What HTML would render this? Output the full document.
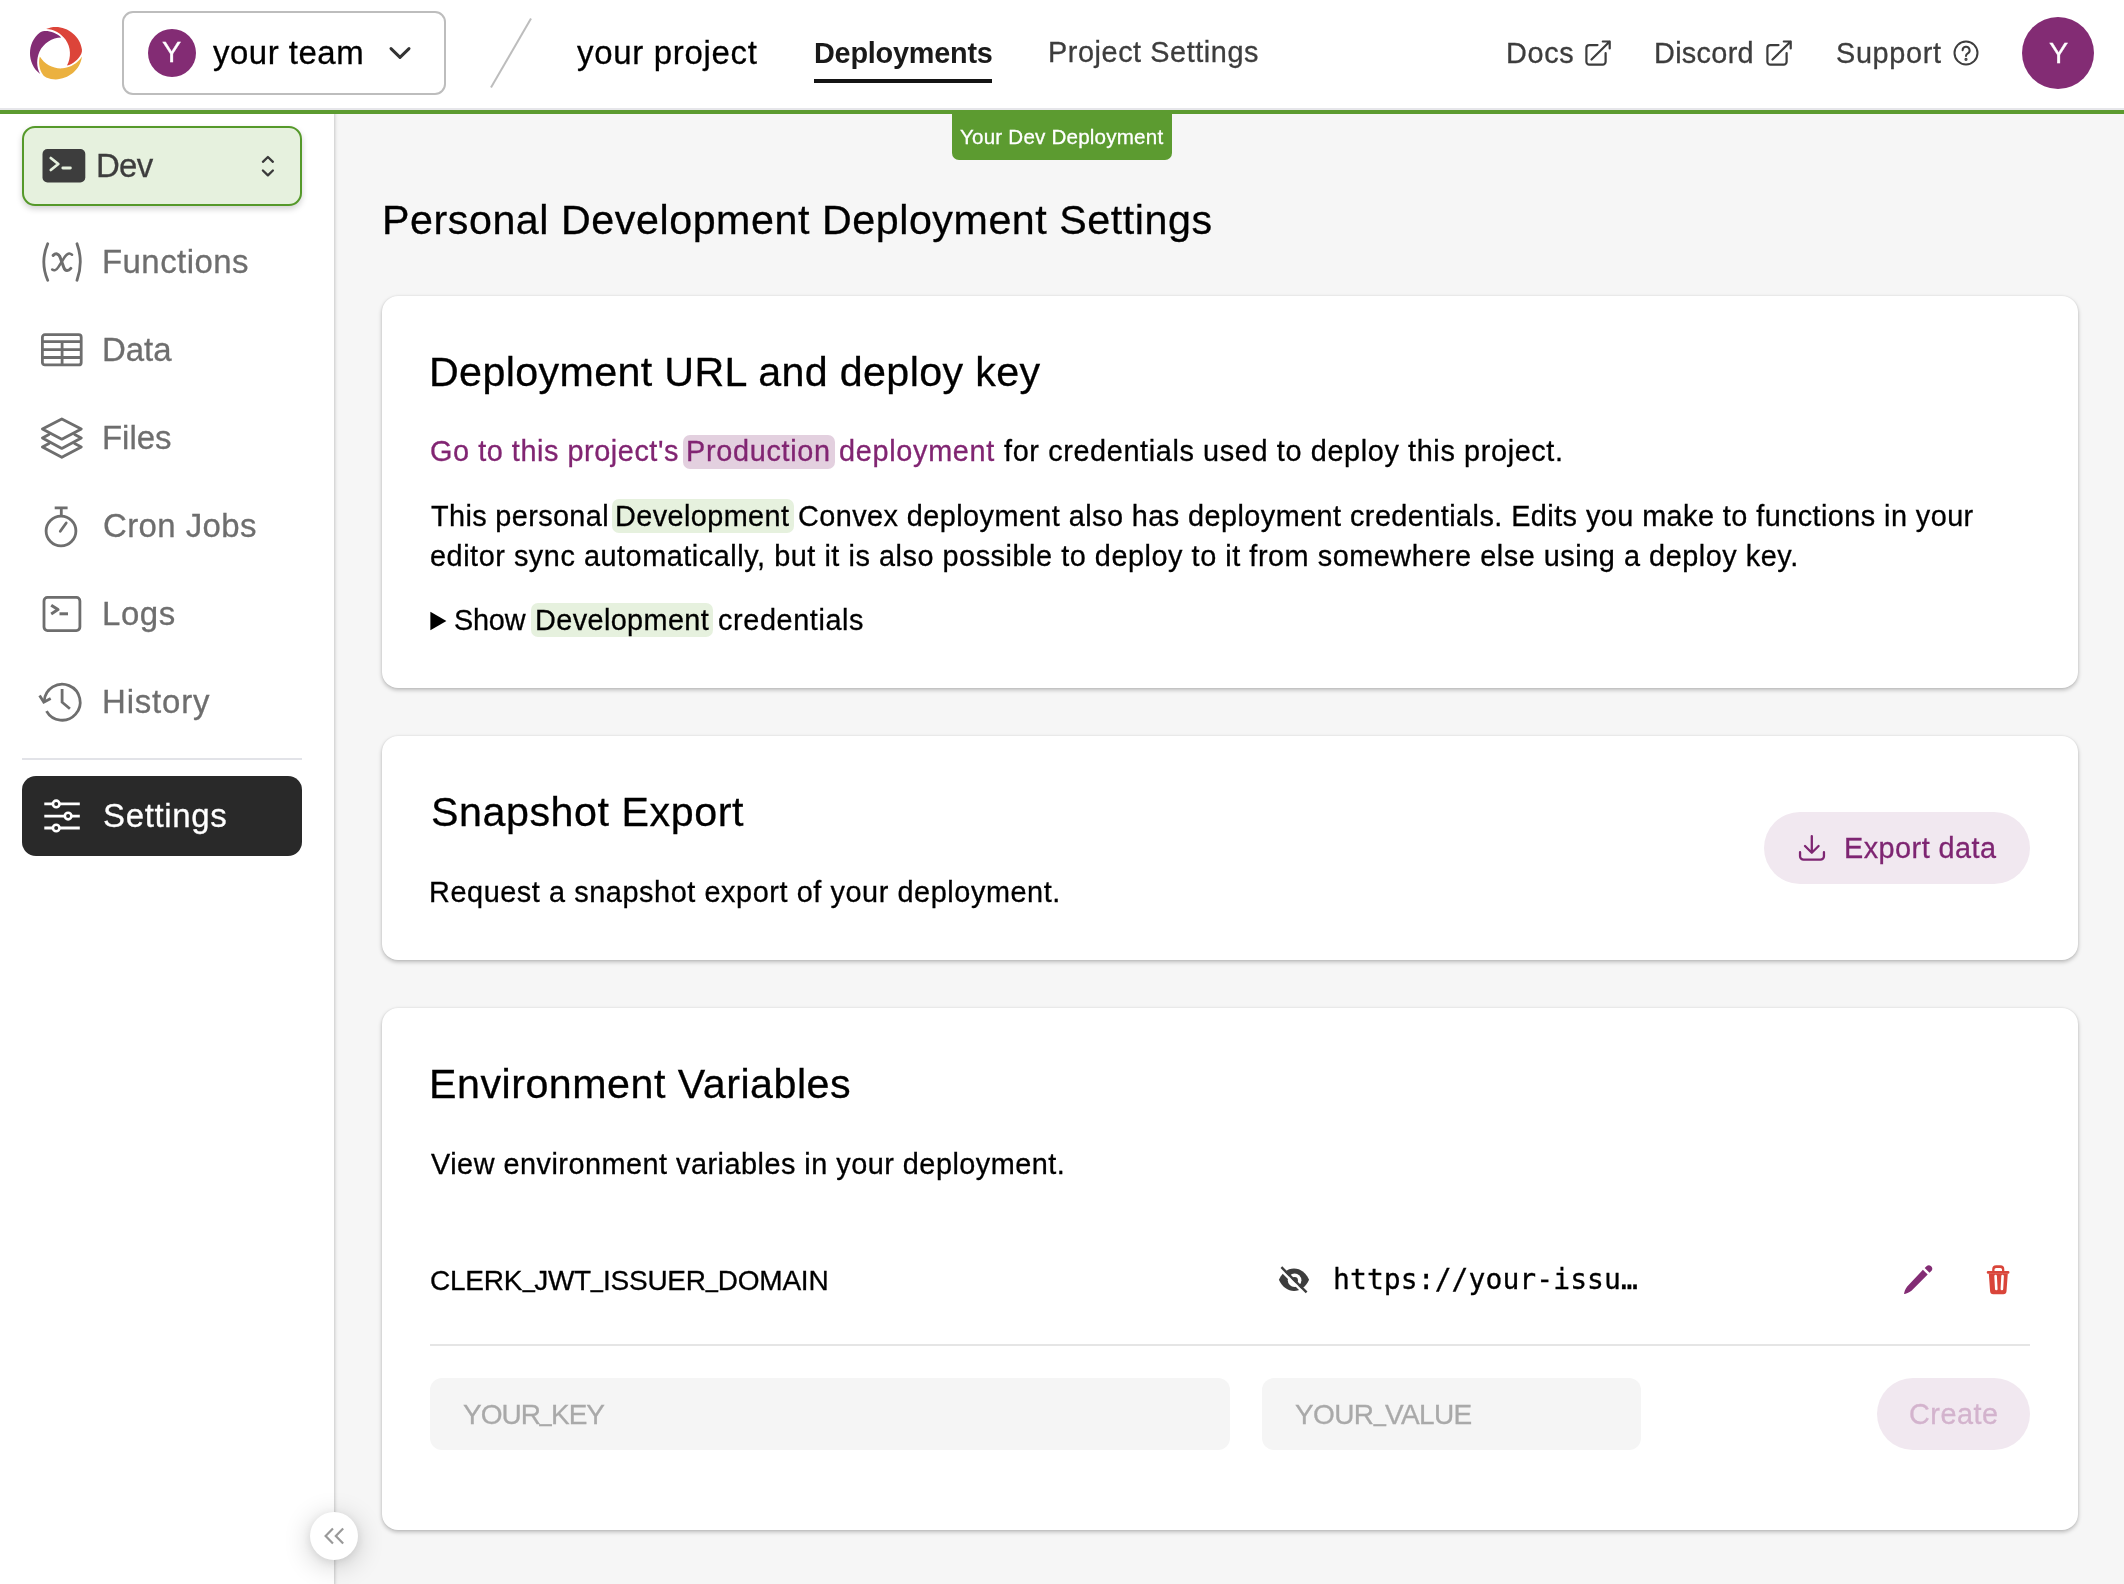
<!DOCTYPE html>
<html lang="en">
<head>
<meta charset="utf-8">
<title>Convex Dashboard - Deployment Settings</title>
<style>
*{box-sizing:border-box;margin:0;padding:0}
html,body{width:2124px;height:1584px;overflow:hidden;background:#f6f6f6}
body{position:relative;font-family:"Liberation Sans",sans-serif;color:#000}
.abs{position:absolute}
.t{position:absolute;white-space:nowrap;will-change:transform;-webkit-text-stroke:0.3px}
svg{position:absolute;overflow:visible}
#hdr{left:0;top:0;width:2124px;height:108px;background:#fff}
#hline{left:0;top:108px;width:2124px;height:2px;background:#e6e6ea}
#gline{left:0;top:110px;width:2124px;height:4px;background:#5c9b30}
#team{left:122px;top:11px;width:324px;height:84px;border:2px solid #bdbdbd;border-radius:11px;background:#fff}
.av{border-radius:50%;background:#832c74}
#tabul{left:814px;top:79px;width:178px;height:4px;background:#141414}
#badge{left:952px;top:112px;width:220px;height:48px;background:#5c9b30;border-radius:0 0 7px 7px}
#side{left:0;top:114px;width:334px;height:1470px;background:#fff}
#sideb{left:334px;top:114px;width:5px;height:1470px;background:linear-gradient(90deg,#d8d8d8 0,#d8d8d8 20%,#e4e4e4 20%,#e4e4e4 40%,#eee 40%,#eee 60%,#f3f3f3 60%,#f3f3f3 80%,#f5f5f5 80%)}
#dev{left:22px;top:126px;width:280px;height:80px;border:2px solid #55992a;border-radius:13px;background:#e6f1de;box-shadow:0 3px 6px rgba(0,0,0,.18)}
#sdiv{left:22px;top:758px;width:280px;height:2px;background:#e2e3e8}
#sett{left:22px;top:776px;width:280px;height:80px;border-radius:14px;background:#292929}
#coll{left:310px;top:1512px;width:48px;height:48px;border-radius:50%;background:#fff;box-shadow:0 5px 28px rgba(0,0,0,.2),0 2px 8px rgba(0,0,0,.08)}
.card{left:382px;width:1696px;background:#fff;border-radius:16px;box-shadow:0 2px 4px rgba(0,0,0,.25),0 0 2px rgba(0,0,0,.08)}
.bp{background:#e3d0df;border-radius:7px}
.bg{background:#e6f1de;border-radius:7px}
.inp{background:#f5f5f5;border-radius:12px;height:72px;top:1378px}
.pill{border-radius:36px;background:#f1e8f0;height:72px}
#rdiv{left:430px;top:1344px;width:1600px;height:2px;background:#e5e5e5}
</style>
</head>
<body>
<!-- HEADER -->
<div class="abs" id="hdr"></div>
<div class="abs" id="hline"></div>
<div class="abs" id="gline"></div>
<svg style="left:29.9px;top:26.7px" width="52" height="52.4" viewBox="31 31.5 122 125" preserveAspectRatio="none"><path d="M108.092 130.021C126.258 128.003 143.385 118.323 152.815 102.167C148.349 142.128 104.653 167.385 68.9858 151.878C65.6992 150.453 62.8702 148.082 60.9288 145.034C52.9134 132.448 50.2786 116.433 54.0644 101.899C64.881 120.567 86.8748 132.01 108.092 130.021Z" fill="#ebb13f"/><path d="M53.4012 90.1735C46.0375 107.191 45.7186 127.114 54.7463 143.51C22.9759 119.608 23.3226 68.4578 54.358 44.7949C57.2286 42.6078 60.64 41.3097 64.2178 41.1121C78.9312 40.336 93.8804 46.0225 104.364 56.6193C83.0637 56.831 62.318 70.4756 53.4012 90.1735Z" fill="#832c74"/><path d="M114.637 61.8552C103.89 46.8701 87.0686 36.6684 68.6387 36.358C104.264 20.1876 148.085 46.4045 152.856 85.1654C153.3 88.7635 152.717 92.4322 151.122 95.6775C144.466 109.195 132.124 119.679 117.702 123.559C128.269 103.96 126.965 80.0151 114.637 61.8552Z" fill="#dc4439"/></svg>
<div class="abs" id="team"></div>
<div class="abs av" style="left:148px;top:29px;width:48px;height:48px"></div>
<svg style="left:388px;top:45px" width="24" height="16" viewBox="0 0 24 16"><path d="M3 3.600 L12 12.300 L21 3.600" fill="none" stroke="#333" stroke-width="3" stroke-linecap="round" stroke-linejoin="round"/></svg>
<svg style="left:488px;top:16px" width="46" height="74" viewBox="488 16 46 74"><path d="M491 87.5 L531 18.5" stroke="#bdbdbd" stroke-width="2" fill="none"/></svg>
<div class="abs" id="tabul"></div>
<!-- ext link icons -->
<svg style="left:1585px;top:39px" width="27" height="27" viewBox="0 0 27 27" fill="none" stroke="#3d3d3d" stroke-width="2.2" stroke-linecap="round" stroke-linejoin="round"><path d="M12.5 6.1H4.4a3 3 0 0 0-3 3V22.7a3 3 0 0 0 3 3H17.6a3 3 0 0 0 3-3V14"/><path d="M17.8 2.5h6.9v6.9M24.7 2.5L6.5 20.5"/></svg>
<svg style="left:1765.7px;top:39px" width="27" height="27" viewBox="0 0 27 27" fill="none" stroke="#3d3d3d" stroke-width="2.2" stroke-linecap="round" stroke-linejoin="round"><path d="M12.5 6.1H4.4a3 3 0 0 0-3 3V22.7a3 3 0 0 0 3 3H17.6a3 3 0 0 0 3-3V14"/><path d="M17.8 2.5h6.9v6.9M24.7 2.5L6.5 20.5"/></svg>
<!-- question icon -->
<svg style="left:1953px;top:40px" width="26" height="26" viewBox="0 0 26 26" fill="none" stroke="#3d3d3d" stroke-width="2" stroke-linecap="round"><circle cx="13" cy="13" r="11.5"/><path d="M9.6 10.2a3.5 3.5 0 1 1 5.2 3.1c-1.1.7-1.8 1.3-1.8 2.6"/><circle cx="13" cy="19.3" r="0.6" fill="#3d3d3d"/></svg>
<div class="abs av" style="left:2022px;top:17px;width:72px;height:72px"></div>
<div class="abs" id="badge"></div>

<!-- SIDEBAR -->
<div class="abs" id="side"></div>
<div class="abs" id="sideb"></div>
<div class="abs" id="dev"></div>
<!-- dev terminal icon -->
<svg style="left:42px;top:149px" width="44" height="34" viewBox="0 0 44 34"><rect x="0.5" y="0.1" width="42.8" height="33.4" rx="5" fill="#3d3d3d"/><path d="M8.8 9 L16.3 15 L8.8 21" fill="none" stroke="#e6f1de" stroke-width="2.8" stroke-linecap="round" stroke-linejoin="round"/><path d="M20.8 19 H28.4" stroke="#e6f1de" stroke-width="2.8" stroke-linecap="round"/></svg>
<!-- caret sort -->
<svg style="left:260px;top:154px" width="16" height="24" viewBox="0 0 16 24" fill="none" stroke="#3a3a3a" stroke-width="2.3" stroke-linecap="round" stroke-linejoin="round"><path d="M2.9 7.8 L7.9 3 L12.9 7.8"/><path d="M2.9 16.5 L7.9 21.4 L12.9 16.5"/></svg>
<!-- functions icon -->
<svg style="left:40px;top:242px" width="44" height="40" viewBox="0 0 44 40" fill="none" stroke="#6e6e6e" stroke-width="2.8" stroke-linecap="round"><path d="M7.7 1.700Q-0.100 20 7.700 38.300"/><path d="M37 1.700Q43.600 20 37 38.300"/><path d="M13.200 13.400C15.500 11 18.700 11.200 20.200 15.500L23.800 25.500C25.200 29.500 28.500 29.200 30.800 26.400" stroke-width="3"/><path d="M32 12.800C29.500 10.600 27 11.500 24.700 15L18.500 24.800C16 28.600 14 28.900 12.200 27.600" stroke-width="2.500"/></svg>
<!-- data/table icon -->
<svg style="left:40px;top:333px" width="44" height="34" viewBox="0 0 44 34" fill="none" stroke="#6e6e6e" stroke-width="2.8" stroke-linejoin="round"><rect x="2.400" y="1.700" width="38.800" height="30.200" rx="2.500"/><path d="M2.400 8.600H41.200M2.400 16.700H41.200M2.400 24.500H41.200M22.100 8.600V32"/></svg>
<!-- files/layers icon -->
<svg style="left:40px;top:416px" width="44" height="44" viewBox="0 0 44 44" fill="none" stroke="#6e6e6e" stroke-width="2.800" stroke-linejoin="round" stroke-linecap="round"><path d="M21.800 2.900 L41.300 12.900 L21.800 23.200 L2.400 12.900Z"/><path d="M9 18.500 L2.400 21.900 L21.800 32.400 L41.300 21.900 L34.600 18.500"/><path d="M9 27.600 L2.400 31 L21.800 41.300 L41.300 31 L34.600 27.600"/></svg>
<!-- cron stopwatch -->
<svg style="left:44px;top:505px" width="34" height="44" viewBox="0 0 34 44" fill="none" stroke="#6e6e6e" stroke-width="2.800"><circle cx="17" cy="26" r="14.900"/><path d="M10.700 2.900H23.600M17.300 2.900V11.500"/><path d="M16.300 26.300L22.200 18" stroke-linecap="round"/></svg>
<!-- logs terminal outline -->
<svg style="left:41px;top:596px" width="42" height="38" viewBox="0 0 42 38" fill="none" stroke="#6e6e6e" stroke-width="2.800" stroke-linejoin="round"><rect x="3" y="1.400" width="35.900" height="33.200" rx="3.500"/><path d="M10.200 9.200L17 13.600L10.200 18" stroke-width="3"/><path d="M18.500 17.800H27" stroke-width="3"/></svg>
<!-- history icon -->
<svg style="left:38px;top:682px" width="44" height="40" viewBox="0 0 44 40" fill="none" stroke="#6e6e6e" stroke-width="2.800" stroke-linejoin="miter"><path d="M6.200 19A18 18 0 1 1 8.500 29.100"/><path d="M1.600 13.500L5.800 20.200L12.700 16.500"/><path d="M24.100 7V20.200L31.900 26.800"/></svg>
<div class="abs" id="sdiv"></div>
<div class="abs" id="sett"></div>
<!-- settings sliders -->
<svg style="left:44px;top:799px" width="36" height="34" viewBox="0 0 36 34" fill="none" stroke="#fff" stroke-width="2.800"><path d="M0.300 4.900H35.800M0.300 17.100H35.800M0.300 29H35.800"/><circle cx="12.200" cy="4.900" r="3.300" fill="#292929" stroke-width="2.600"/><circle cx="24.100" cy="17.100" r="3.300" fill="#292929" stroke-width="2.600"/><circle cx="12.200" cy="29" r="3.300" fill="#292929" stroke-width="2.600"/></svg>
<div class="abs" id="coll"></div>
<svg style="left:322px;top:1526px" width="24" height="20" viewBox="0 0 24 20" fill="none" stroke="#999" stroke-width="2.200" stroke-linecap="square" stroke-linejoin="miter"><path d="M10.200 3.200L3.600 10L10.200 16.800M20.400 3.200L13.800 10L20.400 16.800"/></svg>

<!-- MAIN -->
<div class="abs card" style="top:296px;height:392px"></div>
<div class="abs card" style="top:736px;height:224px"></div>
<div class="abs card" style="top:1008px;height:522px"></div>
<div class="abs bp" style="left:683px;top:435px;width:152px;height:34px"></div>
<div class="abs bg" style="left:612px;top:499px;width:182px;height:34px"></div>
<div class="abs bg" style="left:531px;top:603px;width:182px;height:34px"></div>
<svg style="left:429.500px;top:610.600px" width="17" height="20" viewBox="0 0 17 20"><path d="M0.400 0.800L16.400 10L0.400 19.200Z" fill="#000"/></svg>
<!-- export button -->
<div class="abs pill" style="left:1764px;top:812px;width:266px"></div>
<svg style="left:1797px;top:833px" width="30" height="30" viewBox="0 0 30 30" fill="none" stroke="#7e2572" stroke-width="2.300" stroke-linecap="round" stroke-linejoin="round"><path d="M14.800 3.100V19.600M8 13L14.800 19.800L21.600 13"/><path d="M3.050 19.200V23.200a3.500 3.500 0 0 0 3.500 3.500H23.450a3.500 3.500 0 0 0 3.500-3.500V19.200"/></svg>
<!-- env var row -->
<svg style="left:1278px;top:1264px" width="32" height="32" viewBox="0 0 32 32"><path d="M0.900 15.800C4 8.500 10 4.600 16 4.600S28 8.500 31.100 15.800C28 23 22 27 16 27S4 23 0.900 15.800Z" fill="#3d3d3d"/><circle cx="16.600" cy="16.200" r="6.800" fill="#fff"/><circle cx="16.600" cy="16.200" r="3.300" fill="#3d3d3d"/><path d="M0.700 3.900L27.900 31.100" stroke="#fff" stroke-width="2.600"/><path d="M3.400 3.200L28.600 28.400" stroke="#3d3d3d" stroke-width="2.400"/></svg>
<svg style="left:1902px;top:1264px" width="32" height="32" viewBox="0 0 32 32"><path d="M24.500 2.200a3.400 3.400 0 0 1 4.800 4.800l-1.800 1.800-4.800-4.800ZM20.900 5.800l4.800 4.800L9.500 26.800c-2.500 2-5.500 3-7.500 3.200.400-2.200 1.200-5 3.200-7.500Z" fill="#832c74"/></svg>
<svg style="left:1985px;top:1264px" width="26" height="32" viewBox="0 0 26 32"><path d="M7.200 8V5.200a4 4 0 0 1 4-4h4.100a4 4 0 0 1 4 4V8h-2.300V5.600a1.700 1.700 0 0 0-1.700-1.700h-4.100a1.700 1.700 0 0 0-1.700 1.700V8Z" fill="#d9453a"/><rect x="1.800" y="6.900" width="22.600" height="2.800" rx="1.200" fill="#d9453a"/><path d="M3.800 9.400H22.800L21.500 27.300a3.200 3.200 0 0 1-3.200 3H8.300a3.200 3.200 0 0 1-3.200-3Z" fill="#d9453a"/><path d="M10.600 12L11.300 25M17.600 12L16.900 25" stroke="#fff" stroke-width="2.600" stroke-linecap="round" fill="none"/></svg>
<div class="abs" id="rdiv"></div>
<div class="abs inp" style="left:430px;width:800px"></div>
<div class="abs inp" style="left:1262px;width:379px"></div>
<div class="abs pill" style="left:1877px;top:1378px;width:153px"></div>

<span class="t" style="left:213.10px;top:37px;font-size:32.96px;line-height:32.96px;letter-spacing:0.516px;color:#000;">your team</span>
<span class="t" style="left:577.00px;top:37px;font-size:32.96px;line-height:32.96px;letter-spacing:0.703px;color:#000;">your project</span>
<span class="t" style="left:813.80px;top:39px;font-size:28.84px;line-height:28.84px;letter-spacing:-0.219px;color:#1a1a1a;font-weight:700;-webkit-text-stroke:0;">Deployments</span>
<span class="t" style="left:1048.00px;top:38px;font-size:28.84px;line-height:28.84px;letter-spacing:0.568px;color:#3d3d3d;">Project Settings</span>
<span class="t" style="left:1506.20px;top:39px;font-size:28.84px;line-height:28.84px;letter-spacing:0.645px;color:#3d3d3d;">Docs</span>
<span class="t" style="left:1654.40px;top:39px;font-size:28.84px;line-height:28.84px;letter-spacing:0.319px;color:#3d3d3d;">Discord</span>
<span class="t" style="left:1835.90px;top:39px;font-size:28.84px;line-height:28.84px;letter-spacing:0.673px;color:#3d3d3d;">Support</span>
<span class="t" style="left:960.20px;top:127px;font-size:20.60px;line-height:20.60px;letter-spacing:0.198px;color:#fff;">Your Dev Deployment</span>
<span class="t" style="left:96.10px;top:150px;font-size:32.96px;line-height:32.96px;letter-spacing:-0.712px;color:#3d3d3d;">Dev</span>
<span class="t" style="left:101.50px;top:246px;font-size:32.96px;line-height:32.96px;letter-spacing:0.451px;color:#6e6e6e;">Functions</span>
<span class="t" style="left:101.50px;top:334px;font-size:32.96px;line-height:32.96px;letter-spacing:-0.027px;color:#6e6e6e;">Data</span>
<span class="t" style="left:101.50px;top:422px;font-size:32.96px;line-height:32.96px;letter-spacing:-0.025px;color:#6e6e6e;">Files</span>
<span class="t" style="left:102.50px;top:510px;font-size:32.96px;line-height:32.96px;letter-spacing:0.411px;color:#6e6e6e;">Cron Jobs</span>
<span class="t" style="left:101.50px;top:598px;font-size:32.96px;line-height:32.96px;letter-spacing:0.573px;color:#6e6e6e;">Logs</span>
<span class="t" style="left:101.50px;top:686px;font-size:32.96px;line-height:32.96px;letter-spacing:0.841px;color:#6e6e6e;">History</span>
<span class="t" style="left:102.60px;top:800px;font-size:32.96px;line-height:32.96px;letter-spacing:0.673px;color:#fff;">Settings</span>
<span class="t" style="left:381.50px;top:200px;font-size:41.20px;line-height:41.20px;letter-spacing:0.562px;color:#000;">Personal Development Deployment Settings</span>
<span class="t" style="left:429.00px;top:352px;font-size:41.20px;line-height:41.20px;letter-spacing:0.374px;color:#000;">Deployment URL and deploy key</span>
<span class="t" style="left:429.80px;top:437px;font-size:28.84px;line-height:28.84px;letter-spacing:0.557px;color:#812572;">Go to this project's</span>
<span class="t" style="left:686.40px;top:437px;font-size:28.84px;line-height:28.84px;letter-spacing:0.701px;color:#812572;">Production</span>
<span class="t" style="left:839.00px;top:437px;font-size:28.84px;line-height:28.84px;letter-spacing:0.697px;color:#812572;">deployment</span>
<span class="t" style="left:1004.00px;top:437px;font-size:28.84px;line-height:28.84px;letter-spacing:0.628px;color:#000;">for credentials used to deploy this project.</span>
<span class="t" style="left:430.80px;top:502px;font-size:28.84px;line-height:28.84px;letter-spacing:0.379px;color:#000;">This personal</span>
<span class="t" style="left:614.80px;top:502px;font-size:28.84px;line-height:28.84px;letter-spacing:0.415px;color:#000;">Development</span>
<span class="t" style="left:798.40px;top:502px;font-size:28.84px;line-height:28.84px;letter-spacing:0.441px;color:#000;">Convex deployment also has deployment credentials. Edits you make to functions in your</span>
<span class="t" style="left:429.80px;top:542px;font-size:28.84px;line-height:28.84px;letter-spacing:0.542px;color:#000;">editor sync automatically, but it is also possible to deploy to it from somewhere else using a deploy key.</span>
<span class="t" style="left:454.30px;top:606px;font-size:28.84px;line-height:28.84px;letter-spacing:-0.198px;color:#000;">Show</span>
<span class="t" style="left:535.20px;top:606px;font-size:28.84px;line-height:28.84px;letter-spacing:0.395px;color:#000;">Development</span>
<span class="t" style="left:717.90px;top:606px;font-size:28.84px;line-height:28.84px;letter-spacing:0.610px;color:#000;">credentials</span>
<span class="t" style="left:431.00px;top:792px;font-size:41.20px;line-height:41.20px;letter-spacing:0.566px;color:#000;">Snapshot Export</span>
<span class="t" style="left:429.20px;top:878px;font-size:28.84px;line-height:28.84px;letter-spacing:0.581px;color:#000;">Request a snapshot export of your deployment.</span>
<span class="t" style="left:1844.10px;top:834px;font-size:28.84px;line-height:28.84px;letter-spacing:0.470px;color:#7e2572;">Export data</span>
<span class="t" style="left:429.00px;top:1064px;font-size:41.20px;line-height:41.20px;letter-spacing:0.514px;color:#000;">Environment Variables</span>
<span class="t" style="left:430.50px;top:1150px;font-size:28.84px;line-height:28.84px;letter-spacing:0.494px;color:#000;">View environment variables in your deployment.</span>
<span class="t" style="left:429.80px;top:1267px;font-size:28.00px;line-height:28.00px;letter-spacing:-0.230px;color:#000;">CLERK<span style="display:inline-block;transform:translateY(-3.7px) scaleX(0.78);margin:0 -1.71px">_</span>JWT<span style="display:inline-block;transform:translateY(-3.7px) scaleX(0.78);margin:0 -1.71px">_</span>ISSUER<span style="display:inline-block;transform:translateY(-3.7px) scaleX(0.78);margin:0 -1.71px">_</span>DOMAIN</span>
<span class="t" style="left:1333.00px;top:1266px;font-size:28.00px;line-height:28.00px;letter-spacing:0.084px;color:#000;font-family:'DejaVu Sans Mono', 'Liberation Mono', monospace;">https://your-issu…</span>
<span class="t" style="left:462.90px;top:1401px;font-size:28.00px;line-height:28.00px;letter-spacing:-1.014px;color:#a9a9a9;">YOUR<span style="display:inline-block;transform:translateY(-3.7px) scaleX(0.78);margin:0 -1.71px">_</span>KEY</span>
<span class="t" style="left:1294.50px;top:1401px;font-size:28.00px;line-height:28.00px;letter-spacing:-0.623px;color:#a9a9a9;">YOUR<span style="display:inline-block;transform:translateY(-3.7px) scaleX(0.78);margin:0 -1.71px">_</span>VALUE</span>
<span class="t" style="left:1909.00px;top:1400px;font-size:28.84px;line-height:28.84px;letter-spacing:0.501px;color:#d3b3cd;">Create</span>
<span class="t" style="left:162.00px;top:38px;font-size:28.84px;line-height:28.84px;letter-spacing:0.000px;color:#fff;">Y</span>
<span class="t" style="left:2049.00px;top:39px;font-size:28.84px;line-height:28.84px;letter-spacing:0.000px;color:#fff;">Y</span>
</body>
</html>
